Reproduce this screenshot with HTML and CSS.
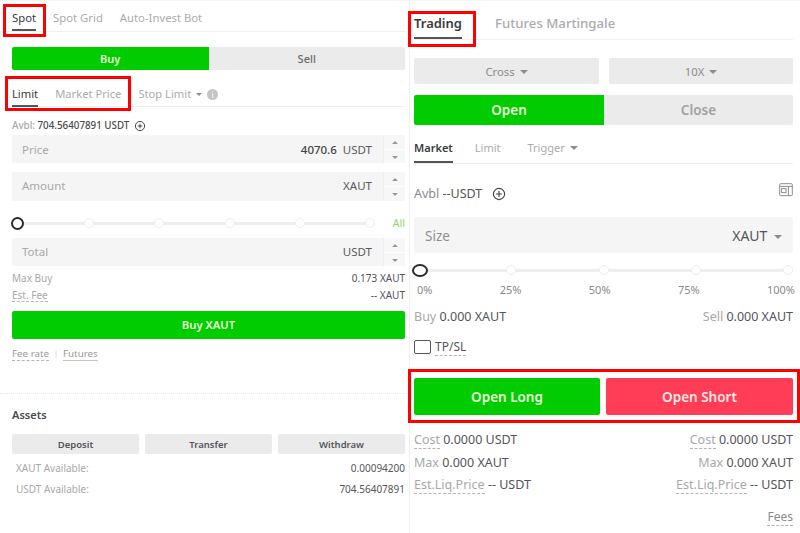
FILE: index.html
```html
<!DOCTYPE html>
<html lang="en">
<head>
<meta charset="utf-8">
<title>Spot and Futures order panels</title>
<link rel="stylesheet" href="styles.css">
</head>
<body>
<div class="page">
  <section class="panel spot">
    <nav class="tabs spot-tabs">
      <span class="tab active">Spot</span>
      <span class="tab">Spot Grid</span>
      <span class="tab">Auto-Invest Bot</span>
    </nav>
    <div class="switch spot-switch">
      <button class="seg seg-on">Buy</button>
      <button class="seg seg-off dark">Sell</button>
    </div>
    <nav class="tabs order-tabs">
      <span class="tab active">Limit</span>
      <span class="tab">Market Price</span>
      <span class="tab">Stop Limit <i class="caret small"></i> <i class="info">i</i></span>
    </nav>
    <div class="avbl-line"><span class="muted">Avbl:</span> 704.56407891 USDT
      <svg class="plus" viewBox="0 0 12 12"><circle cx="6" cy="6" r="4.6"/><path d="M6 3.6v4.8M3.6 6h4.8"/></svg>
    </div>
    <div class="field field-first">
      <span class="field-label">Price</span>
      <span class="field-value"><b>4070.6</b> &nbsp;USDT</span>
      <span class="stepper"><i class="up"></i><i class="down"></i></span>
    </div>
    <div class="field field-second">
      <span class="field-label">Amount</span>
      <span class="field-value">XAUT</span>
      <span class="stepper"><i class="up"></i><i class="down"></i></span>
    </div>
    <div class="slider-row">
      <div class="slider spot-slider">
        <i class="knob"></i><i class="dot"></i><i class="dot"></i><i class="dot"></i><i class="dot"></i><i class="dot"></i>
      </div>
      <span class="all">All</span>
    </div>
    <div class="field field-total">
      <span class="field-label">Total</span>
      <span class="field-value">USDT</span>
      <span class="stepper"><i class="up"></i><i class="down"></i></span>
    </div>
    <div class="kv kv-max"><span class="muted">Max Buy</span><span>0.173 XAUT</span></div>
    <div class="kv kv-fee"><span class="muted dashed">Est. Fee</span><span>-- XAUT</span></div>
    <button class="buy-xaut">Buy XAUT</button>
    <div class="fee-links"><span class="dashed">Fee rate</span><span class="sep">|</span><span class="solid">Futures</span></div>
    <div class="assets">
      <h2 class="assets-title">Assets</h2>
      <div class="asset-buttons">
        <button class="asset-btn">Deposit</button>
        <button class="asset-btn">Transfer</button>
        <button class="asset-btn">Withdraw</button>
      </div>
      <div class="asset-row"><span class="muted">XAUT Available:</span><span>0.00094200</span></div>
      <div class="asset-row"><span class="muted">USDT Available:</span><span>704.56407891</span></div>
    </div>
    <span class="mark mark-spot"></span>
    <span class="mark mark-limit"></span>
  </section>

  <section class="panel futures">
    <nav class="tabs fut-tabs">
      <span class="tab active">Trading</span>
      <span class="tab">Futures Martingale</span>
    </nav>
    <div class="selects">
      <button class="select">Cross <i class="caret"></i></button>
      <button class="select">10X <i class="caret"></i></button>
    </div>
    <div class="switch fut-switch">
      <button class="seg seg-on">Open</button>
      <button class="seg seg-off">Close</button>
    </div>
    <nav class="tabs type-tabs">
      <span class="tab active">Market</span>
      <span class="tab">Limit</span>
      <span class="tab">Trigger <i class="caret"></i></span>
    </nav>
    <div class="fut-avbl">
      <span class="avbl-left"><span class="muted-dark">Avbl</span> --USDT
        <svg class="plus big" viewBox="0 0 12 12"><circle cx="6" cy="6" r="4.8"/><path d="M6 3.4v5.2M3.4 6h5.2"/></svg>
      </span>
      <svg class="calc" viewBox="0 0 14 14"><rect x="0.7" y="0.7" width="12.6" height="12" rx="1"/><path d="M.7 3.4h12.6M9.4 3.4v9.3"/><rect x="2.6" y="5.6" width="4.4" height="4"/></svg>
    </div>
    <div class="size-field">
      <span class="size-label">Size</span>
      <span class="size-unit">XAUT <i class="caret"></i></span>
    </div>
    <div class="slider fut-slider">
      <i class="knob"></i><i class="dot"></i><i class="dot"></i><i class="dot"></i><i class="dot"></i>
    </div>
    <div class="ticks"><span>0%</span><span>25%</span><span>50%</span><span>75%</span><span>100%</span></div>
    <div class="fut-kv buy-sell"><span><span class="muted">Buy</span> 0.000 XAUT</span><span><span class="muted">Sell</span> 0.000 XAUT</span></div>
    <label class="tpsl"><i class="check"></i><span class="dashed">TP/SL</span></label>
    <div class="actions">
      <button class="action long">Open Long</button>
      <button class="action short">Open Short</button>
    </div>
    <div class="fut-kv first"><span><span class="muted dashed">Cost</span> 0.0000 USDT</span><span><span class="muted dashed">Cost</span> 0.0000 USDT</span></div>
    <div class="fut-kv"><span><span class="muted">Max</span> 0.000 XAUT</span><span><span class="muted">Max</span> 0.000 XAUT</span></div>
    <div class="fut-kv fut-kv-last"><span><span class="muted dashed">Est.Liq.Price</span> -- USDT</span><span><span class="muted dashed">Est.Liq.Price</span> -- USDT</span></div>
    <div class="fees"><span class="dashed">Fees</span></div>
    <span class="mark mark-trading"></span>
    <span class="mark mark-actions"></span>
  </section>
</div>
</body>
</html>
```
FILE: styles.css
```css
* { box-sizing: border-box; }
html, body { margin: 0; padding: 0; background: #fff; }
body { font-family: "Noto Sans", "Open Sans", sans-serif; color: #4a4a4e; overflow: hidden; }
button { font: inherit; border: 0; padding: 0; }
i { font-style: normal; }
.page { display: grid; grid-template-columns: 409px 391px; width: 800px; height: 533px; overflow: hidden; }
.panel { position: relative; height: 533px; }
.spot { padding: 3px 3px 0 0; border-top: 1px dotted #ececec; }
.futures { padding: 3px 7px 0 4px; border-left: 1px solid #f0f0f0; border-top: 1px dotted #ececec; }

.muted { color: #a8a8aa; }
.muted-dark { color: #8a8a8c; }
.dashed { border-bottom: 1px dashed #b5b5b5; }
.solid { border-bottom: 1px solid #c5c5c5; }

.tabs { display: flex; border-bottom: 1px solid #efefef; }
.tab { display: block; color: #ababad; white-space: nowrap; }
.tab.active { color: #3a3a3e; border-bottom: 2px solid #555; }

.spot-tabs { height: 28px; padding-left: 12px; gap: 17px; font-size: 11.3px; line-height: 28px; }
.spot-tabs .tab.active { height: 27px; }
.spot-switch { margin: 15px 1px 0 12px; height: 23px; font-size: 11px; }
.switch { display: flex; border-radius: 2px; overflow: hidden; background: #ebebeb; }
.seg { display: block; font-weight: 600; }
.seg-on { background: #00cc00; color: #eaffd8; flex: 0 0 50%; }
.seg-off { background: #ebebeb; color: #a2a2a4; flex: 1; }
.seg-off.dark { color: #6a6a6c; font-weight: 500; }

.order-tabs { margin: 6px 1px 0 12px; height: 31px; gap: 17px; font-size: 11.2px; line-height: 36px; }
.order-tabs .tab.active { height: 31px; }
.info { display: inline-block; width: 11px; height: 11px; margin-left: 2px; border-radius: 50%; background: #c4c4c4; color: #fff; font-size: 8px; line-height: 11px; text-align: center; vertical-align: 0; }

.caret { display: inline-block; width: 0; height: 0; margin-left: 2px; border: 4px solid transparent; border-top: 4px solid #8d8d8f; border-bottom: 0; vertical-align: 2px; }
.caret.small { border-width: 3px; border-bottom: 0; }

.avbl-line { margin: 11px 0 0 12px; height: 15px; font-size: 9.8px; line-height: 15px; color: #4a4a4e; font-weight: 500; }
.plus { width: 12px; height: 12px; margin-left: 2px; vertical-align: -3px; fill: none; stroke: #444; stroke-width: 1; }
.plus.big { width: 14px; height: 14px; margin-left: 6px; }

.field { display: flex; align-items: center; height: 29px; margin: 0 1px 0 12px; padding-left: 10px; background: #f5f5f5; border-radius: 2px; font-size: 11.5px; }
.field-first { margin-top: 2px; height: 28px; }
.field-second { margin-top: 9px; }
.field-total { height: 28px; }
.field-label { color: #a8a8aa; }
.field-value { margin-left: auto; color: #5a5a5e; padding-right: 11px; }
.field-second .field-label, .field-second .field-value,
.field-total .field-label, .field-total .field-value { padding-bottom: 2px; }
.field-value b { font-weight: 500; color: #444; }
.stepper { display: flex; flex-direction: column; width: 22px; height: 100%; background: #fff; border-left: 1px solid #eee; }
.stepper i { position: relative; display: block; flex: 1; background: #f7f7f7; }
.stepper .up { border-bottom: 1px solid #fff; }
.stepper i::after { content: ""; position: absolute; left: 8px; top: 6px; border: 3px solid transparent; }
.stepper .up::after { border-bottom: 3px solid #999; border-top: 0; }
.stepper .down::after { border-top: 3px solid #999; border-bottom: 0; }

.slider-row { display: flex; align-items: flex-end; height: 37px; padding-bottom: 8px; margin: 0 1px 0 11px; }
.slider { position: relative; display: flex; justify-content: space-between; align-items: center; }
.slider::before { content: ""; position: absolute; left: 0; right: 0; top: 50%; height: 3px; margin-top: -1.5px; background: #eee; }
.spot-slider { flex: 0 0 364px; height: 14px; }
.knob { position: relative; width: 13px; height: 13px; border: 2px solid #2a2a30; border-radius: 50%; background: #fff; }
.dot { position: relative; width: 10px; height: 10px; border: 1px solid #eee; border-radius: 50%; background: #fff; }
.all { margin-left: auto; color: #86d86a; font-size: 10.5px; line-height: 14px; }

.kv { display: flex; justify-content: space-between; margin: 0 1px 0 12px; height: 14px; font-size: 10px; line-height: 14px; color: #55555a; }
.kv-max { margin-top: 5px; }
.kv-fee { margin-top: 3px; }
.buy-xaut { display: block; width: 393px; height: 28px; margin: 9px 1px 0 12px; padding-bottom: 2px; background: #00cc00; color: #eaffd8; font-size: 11.3px; font-weight: 600; border-radius: 2px; }
.fee-links { display: flex; gap: 5px; margin: 8px 0 0 12px; font-size: 9.8px; line-height: 13px; color: #9a9a9c; }
.sep { color: #c5c5c5; font-size: 7px; }

.assets { margin-top: 32px; padding: 14px 1px 0 12px; border-top: 1px dotted #e8e8e8; }
.assets-title { margin: 0; font-size: 11px; line-height: 14px; font-weight: 600; color: #4a4a4e; }
.asset-buttons { display: grid; grid-template-columns: repeat(3, 127px); column-gap: 6px; margin-top: 12px; }
.asset-btn { height: 20px; background: #ebebeb; color: #55555a; font-size: 9.5px; font-weight: 600; border-radius: 2px; }
.asset-row { display: flex; justify-content: space-between; padding-left: 4px; margin-top: 7px; font-size: 10px; line-height: 14px; color: #55555a; }

.fut-tabs { height: 36px; gap: 33px; font-size: 13.2px; line-height: 38px; font-weight: 500; }
.fut-tabs .tab.active { height: 35px; font-weight: 600; font-size: 13px; }
.selects { display: grid; grid-template-columns: 185px 184px; column-gap: 10px; margin-top: 18px; }
.select { height: 26px; background: #ebebeb; color: #8a8a8c; font-size: 11.3px; border-radius: 2px; }
.fut-switch { margin-top: 11px; height: 30px; font-size: 13.5px; }
.fut-switch .seg-on { flex: 0 0 190px; }
.type-tabs { height: 39px; gap: 22px; font-size: 11px; line-height: 46px; }
.type-tabs .tab.active { height: 38px; font-weight: 600; }
.type-tabs .tab:last-child { margin-left: 5px; }

.fut-avbl { display: flex; justify-content: space-between; align-items: center; height: 20px; margin-top: 19px; font-size: 12.5px; color: #55555a; }
.calc { width: 14px; height: 14px; margin-top: -6px; fill: none; stroke: #8c8c8c; stroke-width: 1; }
.size-field { display: flex; justify-content: space-between; align-items: center; height: 36px; margin-top: 14px; padding: 0 11px; background: #f5f5f5; border-radius: 3px; font-size: 13.5px; }
.size-label { color: #8f8f91; padding-top: 2px; }
.size-unit { color: #55555a; font-size: 14px; }
.size-unit .caret { margin-left: 3px; }
.fut-slider { height: 14px; margin: 10px 0 0 -2px; }
.fut-slider .knob { width: 16px; margin-right: -4px; }
.ticks { display: flex; justify-content: space-between; margin: 6px -2px 0 0; padding-left: 3px; font-size: 11px; line-height: 14px; color: #8a8a8c; }
.fut-kv { display: flex; justify-content: space-between; height: 14px; font-size: 12.5px; line-height: 14px; color: #55555a; }
.buy-sell { margin-top: 13px; }
.tpsl { display: flex; align-items: center; gap: 4px; margin-top: 14px; height: 18px; font-size: 12px; color: #55555a; }
.check { width: 17px; height: 14px; border: 1.5px solid #555; border-radius: 2px; }
.actions { display: grid; grid-template-columns: 186px 187px; column-gap: 6px; margin-top: 22px; }
.action { height: 37px; color: #eaffd8; font-size: 13.5px; font-weight: 600; border-radius: 2px; }
.long { background: #00cc00; }
.short { background: #ff3d57; color: #ffe9e4; }
.first { margin-top: 18px; }
.fut-kv + .fut-kv { margin-top: 9px; }
.fut-kv + .fut-kv-last { margin-top: 8px; }
.fees { margin-top: 18px; text-align: right; font-size: 12px; line-height: 14px; color: #8a8a8c; }

.mark { position: absolute; border: 3px solid #ff0000; pointer-events: none; }
.mark-spot { left: 3px; top: 3px; width: 43px; height: 33px; }
.mark-limit { left: 5px; top: 75px; width: 126px; height: 35px; }
.mark-trading { left: -2px; top: 10px; width: 68px; height: 36px; }
.mark-actions { left: -2px; top: 368px; width: 392px; height: 54px; }
```
